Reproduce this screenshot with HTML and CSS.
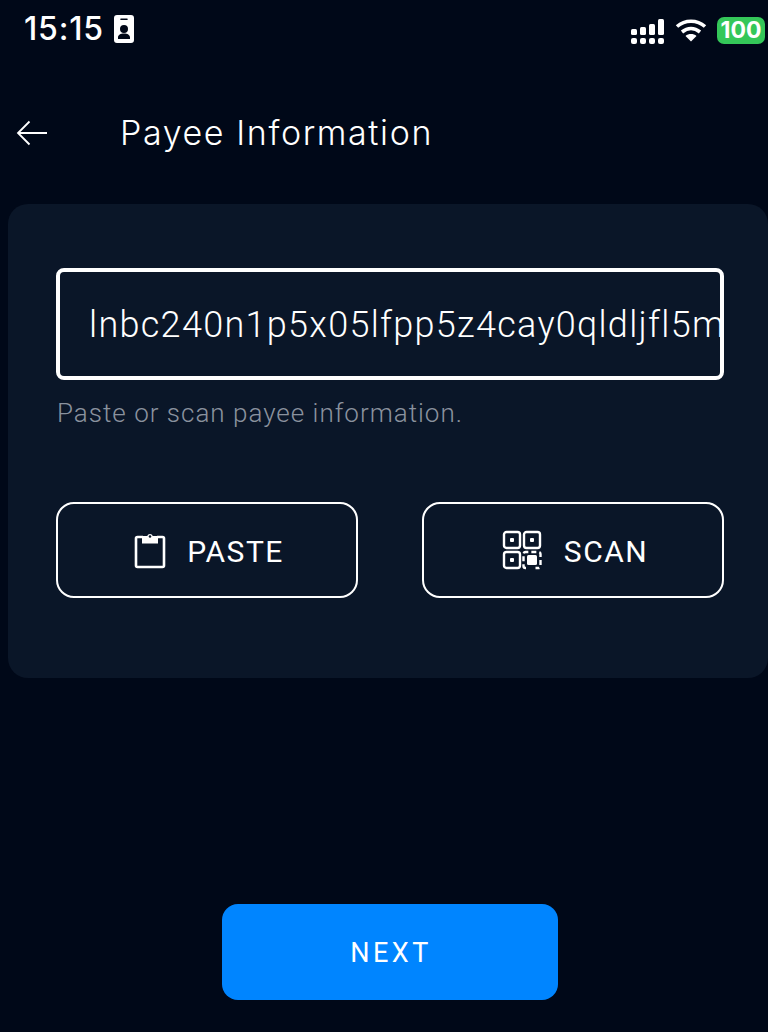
FILE: index.html
```html
<!DOCTYPE html>
<html lang="en">
<head>
<meta charset="utf-8">
<title>Payee Information</title>
<link rel="stylesheet" href="styles.css">
</head>
<body>
<div class="screen">
  <header class="status">
    <div class="status-left">
      <span class="clock">15:15</span>
      <svg class="badge-icon" viewBox="0 0 20 28" width="20" height="28">
        <path fill="#fff" fill-rule="evenodd" d="M3 0h14a3 3 0 0 1 3 3v22a3 3 0 0 1-3 3H3a3 3 0 0 1-3-3V3a3 3 0 0 1 3-3zM7 3.500a.8.8 0 0 0 0 1.600h6a.8.8 0 0 0 0-1.600zM10 10a4 4 0 1 0 0 8 4 4 0 0 0 0-8zM4 24h12v-1.500c0-2.500-2.500-4-6-4s-6 1.500-6 4z"/>
      </svg>
    </div>
    <div class="status-right">
      <svg class="signal" viewBox="0 0 33 26" width="33" height="26" fill="#fff">
        <rect x="0" y="10" width="6" height="6" rx="1.500"/><rect x="9" y="8" width="6" height="8" rx="1.500"/><rect x="18" y="5" width="6" height="11" rx="1.500"/><rect x="27" y="0" width="6" height="16" rx="1.500"/>
        <rect x="0" y="19" width="6" height="6" rx="2"/><rect x="9" y="19" width="6" height="6" rx="2"/><rect x="18" y="19" width="6" height="6" rx="2"/><rect x="27" y="19" width="6" height="6" rx="2"/>
      </svg>
      <svg class="wifi" viewBox="0 0 32 24" width="32" height="24" fill="none" stroke="#fff" stroke-width="3.600">
        <path d="M2 8.500C10 1.500 22 1.500 30 8.500"/><path d="M7 14c5.500-4.500 12.500-4.500 18 0"/><path fill="#fff" stroke="none" d="M16 23.500l-5.500-5.500c3-2.600 8-2.600 11 0z"/>
      </svg>
      <span class="battery">100</span>
      <span class="battery-tip"></span>
    </div>
  </header>

  <nav class="topbar">
    <svg class="back" viewBox="0 0 32 26" width="32" height="26" fill="none" stroke="#fff" stroke-width="1.800">
      <path d="M31 13H2M13.500 1.500L2 13l11.500 11.500"/>
    </svg>
    <h1 class="title">Payee Information</h1>
  </nav>

  <main class="card">
    <div class="input"><span class="input-text">lnbc240n1p5x05lfpp5z4cay0qldljfl5m</span></div>
    <p class="hint">Paste or scan payee information.</p>
    <div class="actions">
      <button class="action action-paste">
        <svg viewBox="0 0 32 38" width="32" height="38" fill="none" stroke="#fff" stroke-width="2.600">
          <path d="M9 6H3.500a1.500 1.500 0 0 0-1.500 1.500v27a1.500 1.500 0 0 0 1.500 1.500h25a1.500 1.500 0 0 0 1.500-1.500v-27A1.500 1.500 0 0 0 28.500 6H23"/>
          <path fill="#fff" stroke="none" d="M8 5h5.200a3 3 0 0 1 5.600 0H24v7.500H8z"/>
          <circle cx="16" cy="5.500" r="1.300" fill="#0a1628" stroke="none"/>
        </svg>
        <span class="action-label">PASTE</span>
      </button>
      <button class="action">
        <svg viewBox="0 0 40 40" width="40" height="40" fill="none" stroke="#fff" stroke-width="2.400">
          <rect x="2" y="2" width="16" height="16" rx="2.500"/><rect x="22" y="2" width="16" height="16" rx="2.500"/><rect x="2" y="22" width="16" height="16" rx="2.500"/>
          <path stroke-dasharray="5 3" d="M24 38h-.500a2 2 0 0 1-2-2V24a2 2 0 0 1 2-2h13a2 2 0 0 1 2 2v12a2 2 0 0 1-2 2h-3"/>
          <g fill="#fff" stroke="none"><rect x="8" y="8" width="4" height="4" rx="1"/><rect x="28" y="8" width="4" height="4" rx="1"/><rect x="8" y="28" width="4" height="4" rx="1"/><rect x="25" y="25" width="10" height="10" rx="1.500"/></g>
        </svg>
        <span class="action-label">SCAN</span>
      </button>
    </div>
  </main>

  <div class="footer">
    <button class="next">NEXT</button>
  </div>
</div>
</body>
</html>
```

FILE: styles.css
```css
* { box-sizing: border-box; }
html, body { margin: 0; padding: 0; }
body {
  width: 768px;
  height: 1032px;
  overflow: hidden;
  background: #000818;
  color: #fff;
  font-family: Roboto, "Liberation Sans", sans-serif;
}
.screen { display: flex; flex-direction: column; height: 1032px; }

.status {
  height: 60px;
  display: flex;
  justify-content: space-between;
  align-items: flex-start;
  padding: 14px 0 0 24px;
}
.status-left { display: flex; align-items: center; gap: 10px; height: 30px; }
.clock { font-family: Inter, sans-serif; font-weight: 500; font-size: 32px; line-height: 32px; letter-spacing: .8px; }
.status-right { display: flex; align-items: center; gap: 12px; height: 30px; margin-top: 1px; }
.signal { margin-top: 3px; margin-left: -1px; }
.wifi { margin-top: -1px; margin-left: -1px; margin-right: -2px; }
.battery {
  width: 48px;
  height: 27px;
  margin-right: -9px;
  background: #34c759;
  border-radius: 7px;
  font-family: Inter, sans-serif;
  font-weight: 700;
  font-size: 23px;
  line-height: 27px;
  text-align: center;
  color: #fff;
}
.battery-tip { width: 3px; height: 9px; background: #2a9a48; border-radius: 0 2px 2px 0; margin-right: -3px; }

.topbar {
  height: 144px;
  display: flex;
  align-items: flex-start;
  padding: 60px 0 0 16px;
}
.back { flex: none; }
.title {
  margin: -4px 0 0 72px;
  font-family: Inter, sans-serif;
  font-weight: 300;
  font-size: 34px;
  line-height: 34px;
  letter-spacing: 1.600px;
  white-space: nowrap;
}

.card {
  margin-left: 8px;
  height: 474px;
  background: #0a1628;
  border-radius: 20px;
  padding: 64px 44px 0 48px;
}
.input {
  height: 112px;
  border: 4px solid #fff;
  border-radius: 8px;
  padding: 2px 0 0 29px;
  display: flex;
  align-items: center;
  overflow: hidden;
}
.input-text {
  font-family: Roboto, sans-serif;
  font-weight: 300;
  font-size: 36px;
  letter-spacing: 1.300px;
  white-space: nowrap;
}
.hint {
  margin: 19px 0 0 1px;
  font-size: 26px;
  line-height: 28px;
  font-weight: 300;
  letter-spacing: 1px;
  color: #8a929e;
}
.actions { display: flex; justify-content: space-between; margin-top: 75px; }
.action {
  width: 302px;
  height: 96px;
  display: flex;
  align-items: center;
  justify-content: center;
  gap: 22px;
  background: transparent;
  border: 2px solid #fff;
  border-radius: 18px;
  color: #fff;
  font-family: Roboto, sans-serif;
  font-weight: 400;
  font-size: 30px;
  letter-spacing: 1.500px;
  padding: 0 0 0 4px;
}
.action-paste { gap: 21px; }
.action-label { padding-top: 2px; }

.footer { flex: 1; display: flex; justify-content: center; padding: 226px 0 0 12px; }
.next {
  width: 336px;
  height: 96px;
  background: #0085ff;
  border: 0;
  border-radius: 16px;
  color: #fff;
  font-family: Roboto, sans-serif;
  font-weight: 400;
  font-size: 27px;
  letter-spacing: 3.500px;
  padding: 2px 0 0 2px;
}
```
